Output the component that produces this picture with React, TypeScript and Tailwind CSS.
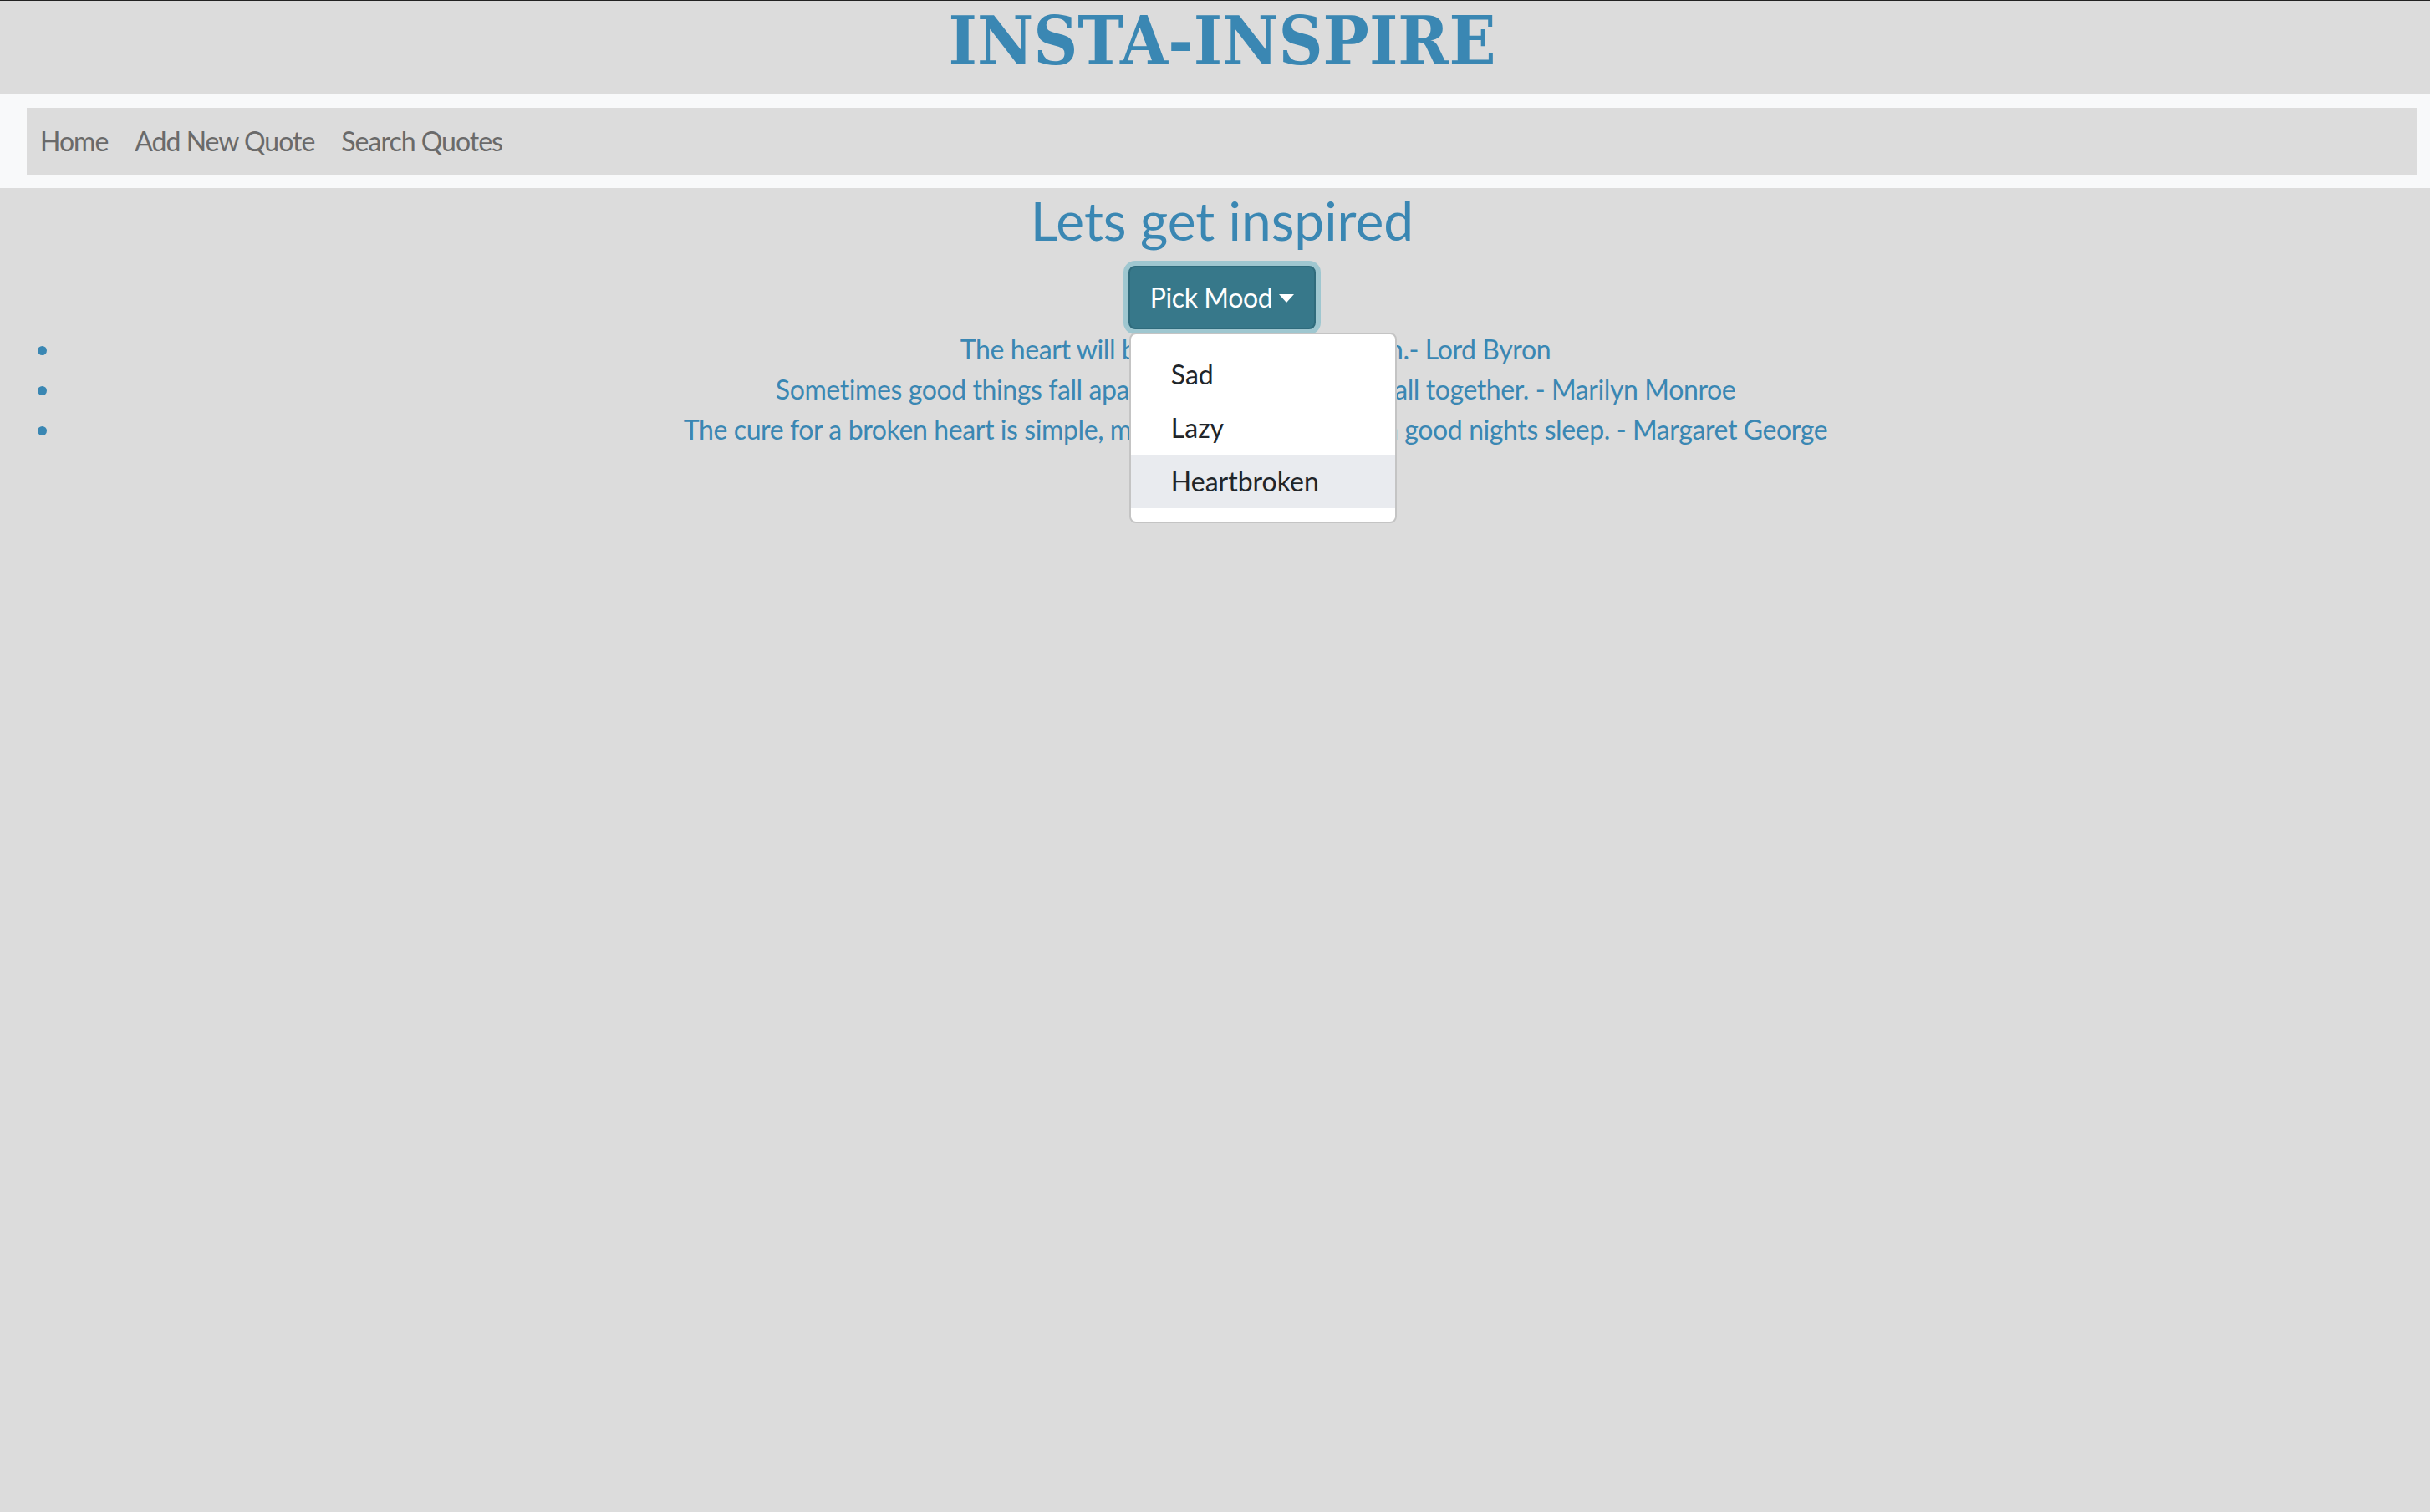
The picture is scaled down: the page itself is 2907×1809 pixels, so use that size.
import React from "react";

const sans = "font-['Lato','Noto_Sans',sans-serif]";

export default function App() {
  const quotes = [
    "The heart will break, but broken live on.- Lord Byron",
    "Sometimes good things fall apart so better things can fall together. - Marilyn Monroe",
    "The cure for a broken heart is simple, my dear: a hot bath and a good nights sleep. - Margaret George",
  ];
  return (
    <div className={`min-h-[1809px] bg-[#dcdcdc] border-t border-[#222222] ${sans}`}>
      <header className="bg-[#dcdcdc]">
        <h1 className="pl-[17px] text-center text-[80px] leading-[96px] mb-[16px] font-bold text-[#3a87b3] font-['DejaVu_Serif',serif]">
          <span className="inline-block scale-x-[0.92]">INSTA-INSPIRE</span>
        </h1>
      </header>
      <nav className="bg-[#f8f9fa] py-[16px] pl-[32px] pr-[15px]">
        <div className="bg-[#dcdcdc] h-[80px] flex items-center tracking-[-1px]">
          {["Home", "Add New Quote", "Search Quotes"].map((l) => (
            <a key={l} className="px-[16px] text-[32px] leading-[48px] text-[#6a6a6a]">
              {l}
            </a>
          ))}
        </div>
      </nav>
      <main>
        <h2 className="pl-[17px] text-center text-[64px] leading-[77px] mb-[16px] text-[#3a87b3]">
          Lets get inspired
        </h2>
        <div className="pl-[17px] flex justify-center">
          <div className="relative">
            <button className="flex items-center bg-[#37788a] border-2 border-[#2f6b7c] rounded-[8px] px-[24px] py-[12px] text-[32px] leading-[48px] text-white tracking-[-0.4px] shadow-[0_0_0_6px_#9fc7d0]">
              Pick Mood
              <span className="ml-[8px] mt-[2px] w-0 h-0 border-t-[10px] border-t-white border-x-[9px] border-x-transparent" />
            </button>
            <div className="absolute left-[1px] top-full mt-[4px] w-[320px] bg-white border-2 border-[#c4c4c4] rounded-[8px] py-[16px] z-10">
              {["Sad", "Lazy", "Heartbroken"].map((m) => (
                <div
                  key={m}
                  className={`px-[48px] py-[8px] text-[32px] leading-[48px] text-[#212529] ${m === "Heartbroken" ? "bg-[#e9ebef]" : ""}`}
                >
                  {m}
                </div>
              ))}
            </div>
          </div>
        </div>
        <ul className="list-disc pl-[73px] text-[#3a87b3] marker:text-[#3a87b3]">
          {quotes.map((q) => (
            <li key={q} className="text-[32px] leading-[48px]">
              <div className="pl-[24px] text-center tracking-[-0.4px]">{q}</div>
            </li>
          ))}
        </ul>
      </main>
    </div>
  );
}
